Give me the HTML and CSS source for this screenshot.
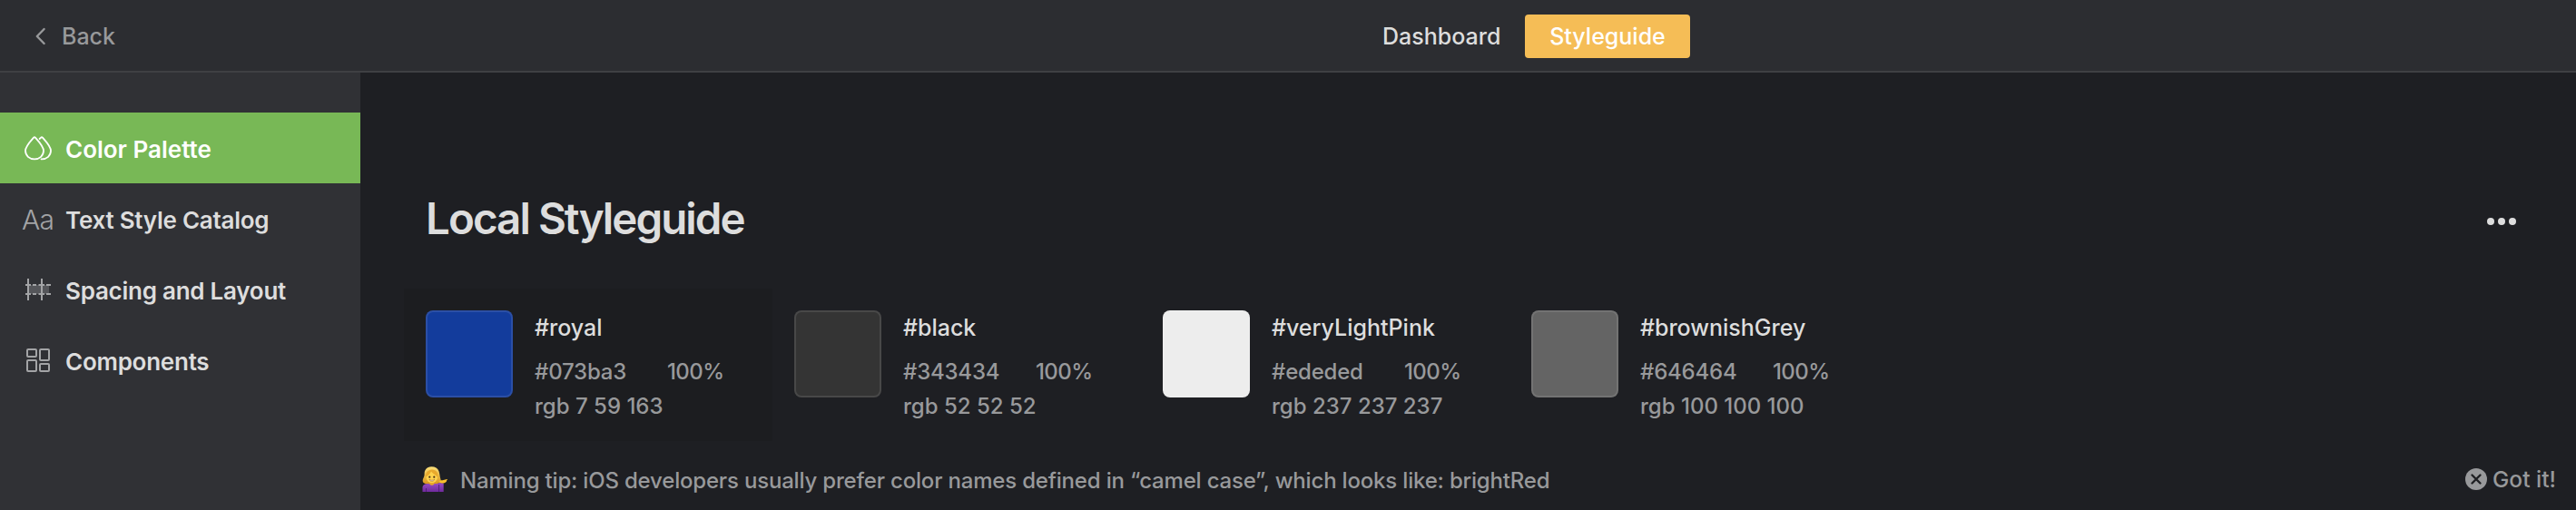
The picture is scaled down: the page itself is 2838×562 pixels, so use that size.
FILE: index.html
```html
<!DOCTYPE html>
<html lang="en">
<head>
<meta charset="utf-8">
<title>Local Styleguide</title>
<link rel="stylesheet" href="styles.css">
</head>
<body>
<div class="app">
  <header class="topbar">
    <a class="back">
      <svg class="back-icon" width="12" height="20" viewBox="0 0 12 20" fill="none" stroke="currentColor" stroke-width="2.4" stroke-linecap="round" stroke-linejoin="round"><path d="M9.6 2 1.8 10l7.8 8"/></svg>
      <span>Back</span>
    </a>
    <nav class="tabs">
      <a class="tab">Dashboard</a>
      <a class="tab tab-active">Styleguide</a>
    </nav>
  </header>
  <div class="body">
    <aside class="sidebar">
      <a class="item item-active">
        <svg class="item-icon" width="34" height="30" viewBox="0 0 34 30" fill="none" stroke="#fff" stroke-width="1.8" stroke-linecap="round" stroke-linejoin="round"><path d="M13.800 2.900C14.500 2.200 15.500 2.200 16.200 2.900C19.800 7 25 12.500 25 17.100C25 22.700 20.500 26.300 15 26.300S5 22.700 5 17.100C5 12.500 10.200 7 13.800 2.900Z"/><path d="M20.600 4 21.800 2.900C22.500 2.200 23.500 2.200 24.200 2.900C27.800 7 33 12.500 33 17.100C33 22.700 28.500 26.300 23 26.300H22.500"/></svg>
        <span class="label label-palette">Color Palette</span>
      </a>
      <a class="item">
        <span class="item-icon aa">Aa</span>
        <span class="label">Text Style Catalog</span>
      </a>
      <a class="item">
        <svg class="item-icon" width="34" height="30" viewBox="0 0 34 30" fill="none" stroke="#a3a4a6" stroke-width="2"><rect x="7" y="9" width="24" height="10" fill="#55565a" stroke="none"/><path d="M8 2v24M23 2v24"/><path d="M5 9h6M13 9h4M19.500 9h6.500M28 9h5M5 19h6M13 19h4M19.500 19h6.500M28 19h5"/></svg>
        <span class="label">Spacing and Layout</span>
      </a>
      <a class="item">
        <svg class="item-icon" width="34" height="30" viewBox="0 0 34 30" fill="none" stroke="#a3a4a6" stroke-width="2"><rect x="7" y="2" width="10" height="8" rx="1"/><rect x="21" y="2" width="10" height="12" rx="1"/><rect x="7" y="14" width="10" height="12" rx="1"/><rect x="21" y="18" width="10" height="8" rx="1"/></svg>
        <span class="label">Components</span>
      </a>
    </aside>
    <main class="content">
      <div class="heading">
        <h1 class="title">Local Styleguide</h1>
        <div class="more"><i></i><i></i><i></i></div>
      </div>
      <div class="cards">
        <section class="card card-hover">
          <div class="swatch royal"></div>
          <div class="info">
            <div class="name">#royal</div>
            <div class="line"><span class="hex">#073ba3</span><span class="alpha">100%</span></div>
            <div class="line">rgb 7 59 163</div>
          </div>
        </section>
        <section class="card">
          <div class="swatch black"></div>
          <div class="info">
            <div class="name">#black</div>
            <div class="line"><span class="hex">#343434</span><span class="alpha">100%</span></div>
            <div class="line">rgb 52 52 52</div>
          </div>
        </section>
        <section class="card">
          <div class="swatch pink"></div>
          <div class="info">
            <div class="name">#veryLightPink</div>
            <div class="line"><span class="hex">#ededed</span><span class="alpha">100%</span></div>
            <div class="line">rgb 237 237 237</div>
          </div>
        </section>
        <section class="card">
          <div class="swatch grey"></div>
          <div class="info">
            <div class="name">#brownishGrey</div>
            <div class="line"><span class="hex">#646464</span><span class="alpha">100%</span></div>
            <div class="line">rgb 100 100 100</div>
          </div>
        </section>
      </div>
      <footer class="tip">
        <svg class="emoji" width="28" height="28" viewBox="0 0 28 28">
          <defs>
            <linearGradient id="hair" x1="0" y1="0" x2="0" y2="1"><stop offset="0" stop-color="#fbe07a"/><stop offset="1" stop-color="#d9971c"/></linearGradient>
            <linearGradient id="shirt" x1="0" y1="0" x2="0" y2="1"><stop offset="0" stop-color="#9a4fc4"/><stop offset="1" stop-color="#6f2a9c"/></linearGradient>
          </defs>
          <path d="M10.500.3C5 .2 2.500 4 2.600 8.500C2.700 12 .3 13.500.8 16.500C1.200 19 4.500 19.500 7 19H15C19.500 19 21.500 17 20.300 13.500C19.400 11 19.600 8 18.500 5.200C17.200 2 14.500.4 10.500.3Z" fill="url(#hair)"/>
          <path d="M.5 28V23.500C.5 20.500 3 19.200 6 19H15C17 19 18 18.600 19 18L23.700 18.500V28Z" fill="url(#shirt)"/>
          <path d="M18.600 20V28M4.500 24V28" stroke="#4f1c75" stroke-width=".9"/>
          <path d="M8.300 16h5v3.500c-1.500 1.600-3.500 1.600-5 0Z" fill="#e6a72a"/>
          <ellipse cx="10.800" cy="11.700" rx="6.200" ry="6.300" fill="#ffd34d"/>
          <path d="M4 11.500C6.500 10.500 9 8 10 5.500C12 8.500 15 9 17.300 12C18.500 7 15.500 3.500 11 3.400C6.500 3.400 3.600 7 4 11.500Z" fill="#e9a92c"/>
          <circle cx="8.300" cy="11.700" r="1.100" fill="#4e3414"/><circle cx="13.300" cy="11.700" r="1.100" fill="#4e3414"/>
          <path d="M8 14.300c1.800 1.300 3.800 1.300 5.600 0-.5 2.600-5 2.600-5.600 0Z" fill="#fff" stroke="#8b4c1c" stroke-width=".5"/>
          <path d="M18.800 17.600C19 15.500 20.500 15 22.500 15.200L27.500 13.900C28.300 14 28 15 27.200 15.300L26.800 16.800C26 18.200 23.500 18.500 21.500 18.600Z" fill="#fbc02d"/>
        </svg>
        <span class="tip-text">Naming tip: iOS developers usually prefer color names defined in “camel case”, which looks like: brightRed</span>
        <a class="dismiss">
          <svg width="24" height="24" viewBox="0 0 24 24"><circle cx="12" cy="12" r="12" fill="#98999b"/><path d="m7.500 7.500 9 9m0-9-9 9" stroke="#1f2023" stroke-width="2.400" stroke-linecap="round"/></svg>
          <span class="dismiss-text">Got it!</span>
        </a>
      </footer>
    </main>
  </div>
</div>
</body>
</html>
```
FILE: styles.css
```css
* { box-sizing: border-box; }
body {
  margin: 0;
  background: #1e1f23;
  color: #dddddd;
  font-family: Inter, "Liberation Sans", sans-serif;
  font-size: 25px;
}
.app { height: 562px; display: flex; flex-direction: column; overflow: hidden; }
.topbar {
  height: 80px;
  flex: none;
  display: grid;
  grid-template-columns: 1504px 1fr;
  align-items: center;
  background: #2c2d31;
  border-bottom: 2px solid #3f4043;
}
.back { display: flex; align-items: center; gap: 17px; padding-left: 39px; padding-top: 2px; color: #98999b; font-weight: 500; }
.tabs { display: flex; align-items: center; padding-top: 2px; }
.tab { width: 176px; height: 48px; line-height: 48px; padding-left: 19px; font-weight: 500; white-space: nowrap; }
.tab-active { width: 182px; padding: 0; text-align: center; color: #fff; background: #f5bd56; border-radius: 4px; }
.body { flex: 1; display: flex; min-height: 0; }
.sidebar { width: 397px; flex: none; background: #303135; padding-top: 44px; }
.item { height: 78px; display: flex; align-items: center; gap: 15px; padding-left: 23px; padding-top: 2px; font-size: 26px; font-weight: 600; white-space: nowrap; }
.item-active { background: #78b856; color: #fff; }
.item-icon { width: 34px; flex: none; }
.aa { font-size: 30px; font-weight: 300; line-height: 34px; color: #a3a4a6; padding-left: 1px; letter-spacing: -0.8px; }
.label { padding-top: 1px; letter-spacing: -0.25px; }
.label-palette { letter-spacing: 0; }
.content { flex: 1; display: flex; flex-direction: column; }
.heading { display: flex; justify-content: space-between; align-items: center; height: 90px; margin: 117px 66px 31px 72px; }
.title { margin: 0; padding-bottom: 2px; font-size: 47.5px; font-weight: 600; line-height: 60px; letter-spacing: -1.95px; }
.more { display: flex; gap: 4px; padding-top: 4px; }
.more i { width: 8px; height: 8px; border-radius: 50%; background: #dddddd; }
.cards { display: flex; margin-left: 48px; }
.card { width: 406px; height: 168px; display: flex; gap: 24px; padding: 24px; }
.card-hover { background: #1c1d20; }
.swatch { width: 96px; height: 96px; flex: none; border-radius: 8px; border: 2px solid rgba(255, 255, 255, 0.1); }
.royal { background: #133c9c; }
.black { background: #343434; }
.pink { background: #ededed; }
.grey { background: #646464; }
.name { font-weight: 500; line-height: 38px; height: 49px; }
.line { display: flex; line-height: 38px; height: 38px; font-size: 24px; font-weight: 450; color: #98999b; white-space: nowrap; }
.hex { width: 146px; letter-spacing: -0.2px; }
.alpha { letter-spacing: -0.6px; }
.tip { display: flex; align-items: center; margin: 22px 22px 0 68px; height: 40px; font-size: 24px; font-weight: 450; color: #98999b; }
.emoji { margin-right: 14px; }
.tip-text { white-space: nowrap; padding-top: 2px; letter-spacing: -0.185px; }
.dismiss { display: flex; align-items: center; gap: 6px; margin-left: auto; }
.dismiss-text { font-size: 24.5px; padding-bottom: 1px; }
```
